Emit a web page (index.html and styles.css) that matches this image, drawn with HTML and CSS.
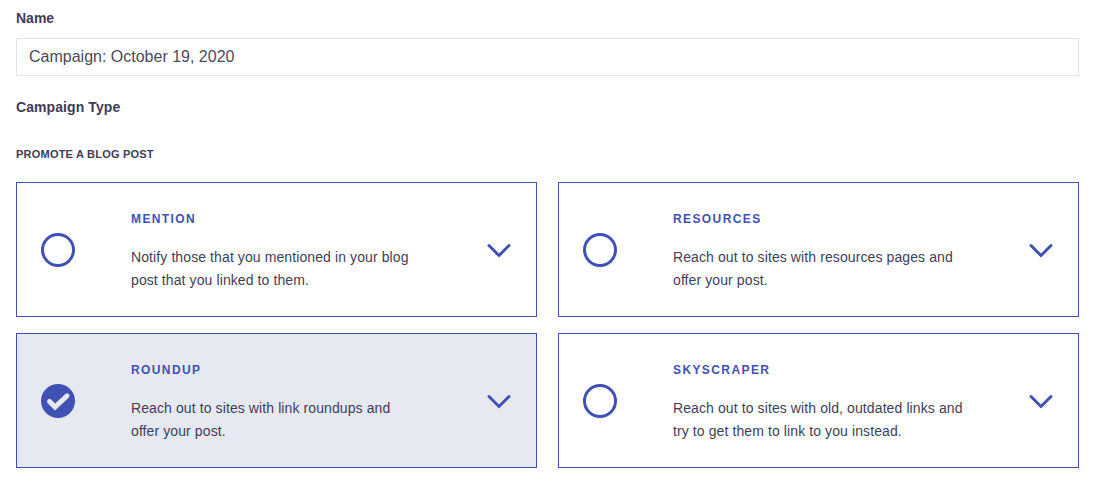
FILE: index.html
```html
<!DOCTYPE html>
<html lang="en">
<head>
<meta charset="utf-8">
<title>Campaign</title>
<link rel="stylesheet" href="styles.css">
</head>
<body>
<form class="form">
  <label class="label label-name" for="name">Name</label>
  <input class="input" id="name" type="text" value="Campaign: October 19, 2020">
  <div class="label label-type">Campaign Type</div>
  <div class="group-title">PROMOTE A BLOG POST</div>
  <div class="grid">
    <div class="card">
      <div class="radio"><svg class="icon-radio" viewBox="0 0 34 34"><circle cx="17" cy="17" r="15.5"/></svg></div>
      <div class="body">
        <div class="card-title">MENTION</div>
        <p class="card-text">Notify those that you mentioned in your blog<br>post that you linked to them.</p>
      </div>
      <svg class="chevron" viewBox="0 0 24 15"><path d="M2 2.5l10 10 10-10"/></svg>
    </div>
    <div class="card">
      <div class="radio"><svg class="icon-radio" viewBox="0 0 34 34"><circle cx="17" cy="17" r="15.5"/></svg></div>
      <div class="body">
        <div class="card-title">RESOURCES</div>
        <p class="card-text">Reach out to sites with resources pages and<br>offer your post.</p>
      </div>
      <svg class="chevron" viewBox="0 0 24 15"><path d="M2 2.5l10 10 10-10"/></svg>
    </div>
    <div class="card card-selected">
      <div class="radio"><svg class="icon-check" viewBox="0 0 34 34"><circle cx="17" cy="17" r="17"/><path d="M8.5 17.5l5.5 5.5L26 11.8"/></svg></div>
      <div class="body">
        <div class="card-title">ROUNDUP</div>
        <p class="card-text">Reach out to sites with link roundups and<br>offer your post.</p>
      </div>
      <svg class="chevron" viewBox="0 0 24 15"><path d="M2 2.5l10 10 10-10"/></svg>
    </div>
    <div class="card">
      <div class="radio"><svg class="icon-radio" viewBox="0 0 34 34"><circle cx="17" cy="17" r="15.5"/></svg></div>
      <div class="body">
        <div class="card-title">SKYSCRAPER</div>
        <p class="card-text">Reach out to sites with old, outdated links and<br>try to get them to link to you instead.</p>
      </div>
      <svg class="chevron" viewBox="0 0 24 15"><path d="M2 2.5l10 10 10-10"/></svg>
    </div>
  </div>
</form>
</body>
</html>
```
FILE: styles.css
```css
* { box-sizing: border-box; }
html, body { margin: 0; padding: 0; background: #fff; }
body { font-family: "Liberation Sans", Arial, sans-serif; color: #3a3b55; }
.form { display: flex; flex-direction: column; padding: 10px 22px 0 16px; }
.label { display: block; font-size: 14px; line-height: 16px; font-weight: 700; color: #3c3d58; }
.input {
  display: block; width: 100%; height: 38px; margin-top: 12px; padding: 0 12px;
  border: 1px solid #e3e3e3; background: #fff; outline: none;
  font-family: inherit; font-size: 16px; color: #4a4b5c;
}
.label-type { margin-top: 23px; letter-spacing: .08px; }
.group-title { margin-top: 33px; font-size: 11px; line-height: 13px; font-weight: 700; letter-spacing: .22px; color: #3c3d58; }
.grid { display: grid; grid-template-columns: 521px 521px; column-gap: 21px; row-gap: 16px; margin-top: 21px; }
.card { display: flex; align-items: center; height: 135px; border: 1px solid #3f51b5; background: #fff; padding-left: 24px; }
.card-selected { background: #e6e8f2; }
.radio { flex: none; width: 34px; height: 34px; margin-right: 56px; }
.radio svg { display: block; width: 34px; height: 34px; }
.icon-radio circle { fill: none; stroke: #3f51b5; stroke-width: 3; }
.icon-check circle { fill: #3f51b5; }
.icon-check path { fill: none; stroke: #e6e8f2; stroke-width: 5; stroke-linecap: round; stroke-linejoin: miter; }
.body { flex: none; align-self: flex-start; width: 356px; padding-top: 29px; }
.card-title { font-size: 12px; line-height: 14px; font-weight: 700; letter-spacing: 1.4px; color: #3f51b5; }
.card-text { margin: 20px 0 0; font-size: 14px; line-height: 23px; letter-spacing: .1px; color: #3e3f58; }
.chevron { flex: none; width: 24px; height: 15px; margin-top: 2px; fill: none; stroke: #3f51b5; stroke-width: 3; stroke-linecap: round; stroke-linejoin: miter; }
```
